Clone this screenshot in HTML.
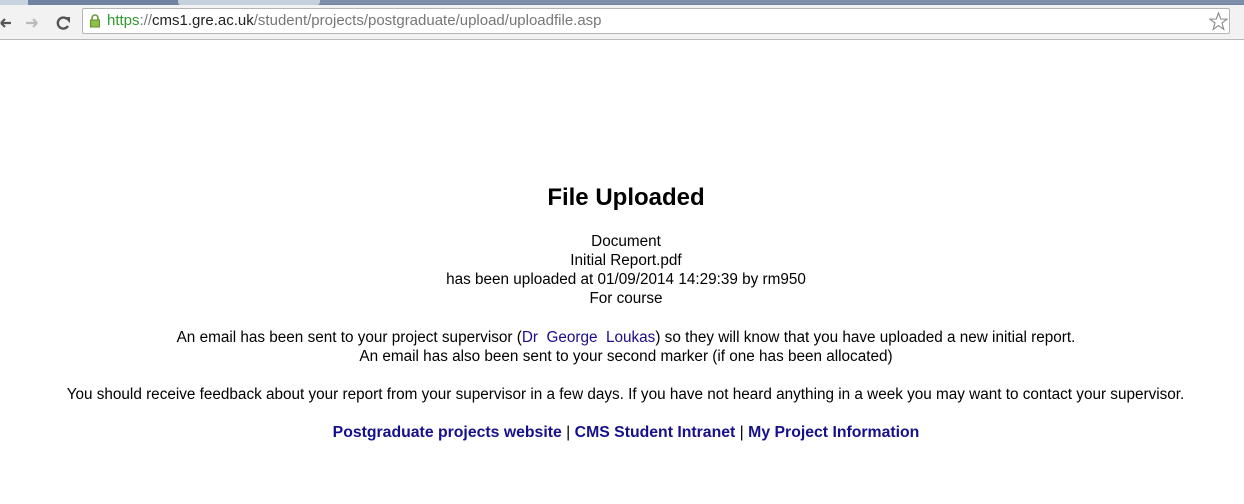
<!DOCTYPE html>
<html><head><meta charset="utf-8"><style>
html,body{margin:0;padding:0;width:1244px;height:504px;overflow:hidden;background:#fff;font-family:"Liberation Sans",Arial,sans-serif;}
.tabs{position:absolute;left:0;top:0;width:1244px;height:5px;background:#6f82a0;}
.tab1{position:absolute;left:0;top:0;width:28px;height:5px;background:#c9d2df;}
.tab2{position:absolute;left:178px;top:0;width:142px;height:5px;background:#c6cfdc;border-radius:0 0 3px 3px;}
.tab3{position:absolute;left:320px;top:0;width:924px;height:4px;background:#7d8fab;}
.bar{position:absolute;left:0;top:5px;width:1244px;height:34px;background:#f2f2f2;border-bottom:1px solid #b8b8b8;}
.url{position:absolute;left:82px;top:8px;width:1148px;height:26px;background:#fff;border:1px solid #b4b4b4;border-radius:2px;box-sizing:border-box;font-size:15px;line-height:24px;color:#777;}
.url span.g{color:#2f9a2f}
.url span.d{color:#222}
.line{position:absolute;left:0;width:1252px;text-align:center;font-size:15.3px;color:#000;white-space:nowrap;}
a{color:#1a0d8a;text-decoration:none}
.lk{color:#16108a;font-weight:bold}
</style></head><body>
<div class="tabs"></div><div class="tab3"></div><div class="tab1"></div><div class="tab2"></div>
<div class="bar">
<svg style="position:absolute;left:0;top:10px" width="80" height="16">
<path d="M1 8 H11 M1 8 L5 4 M1 8 L5 12" stroke="#555" stroke-width="2.2" fill="none"/>
<path d="M26 8 H37 M37 8 L33 4 M37 8 L33 12" stroke="#bbb" stroke-width="2.2" fill="none"/>
<path d="M67 4 A5.5 5.5 0 1 0 68 11" stroke="#555" stroke-width="2.4" fill="none"/>
<path d="M64 2 L70 2 L70 8 Z" fill="#555"/>
</svg>
</div>
<div class="url">
<svg style="position:absolute;left:6px;top:5px" width="12" height="14"><path d="M3 6 V4 A3 3 0 0 1 9 4 V6" stroke="#6a9a3a" stroke-width="1.6" fill="none"/><rect x="1.5" y="6" width="9" height="7" fill="#8cc04a" stroke="#5e8e2e"/></svg>
<span style="position:absolute;left:24px;top:0"><span class="g">https</span>://<span class="d">cms1.gre.ac.uk</span>/student/projects/postgraduate/upload/uploadfile.asp</span>
<svg style="position:absolute;left:1126px;top:3px" width="19" height="19"><path d="M9.5 1 L11.8 7 L18 7.2 L13 11 L14.8 17.4 L9.5 13.6 L4.2 17.4 L6 11 L1 7.2 L7.2 7 Z" fill="none" stroke="#888" stroke-width="1.1"/></svg>
</div>
<div class="line" style="top:184px;font-size:24px;font-weight:bold;">File Uploaded</div>
<div class="line" style="top:233px">Document</div>
<div class="line" style="top:252px">Initial Report.pdf</div>
<div class="line" style="top:271px">has been uploaded at 01/09/2014 14:29:39 by rm950</div>
<div class="line" style="top:290px">For course</div>
<div class="line" style="top:329px">An email has been sent to your project supervisor (<a>Dr&nbsp; George&nbsp; Loukas</a>) so they will know that you have uploaded a new initial report.</div>
<div class="line" style="top:348px">An email has also been sent to your second marker (if one has been allocated)</div>
<div class="line" style="top:386px;width:1251px">You should receive feedback about your report from your supervisor in a few days. If you have not heard anything in a week you may want to contact your supervisor.</div>
<div class="line" style="top:424px;font-size:15.8px"><span class="lk">Postgraduate projects website</span> | <span class="lk">CMS Student Intranet</span> | <span class="lk">My Project Information</span></div>
</body></html>
